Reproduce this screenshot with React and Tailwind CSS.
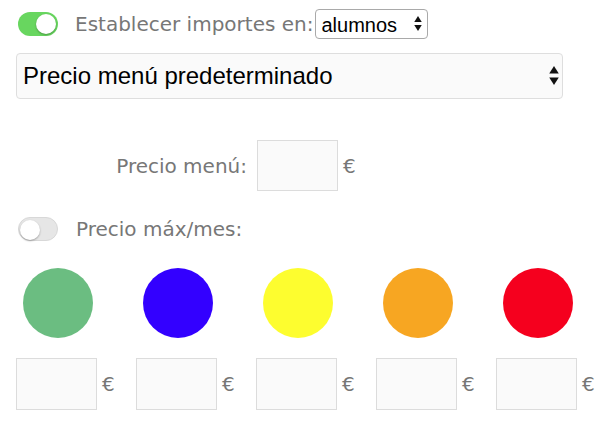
import { useState } from 'react';

const colores = ['#6bbd81', '#3300ff', '#fdfd2f', '#f7a622', '#f5001e'];

function Toggle({ on }) {
  return (
    <div
      className={`relative w-[40px] h-[24px] rounded-full shrink-0 ${
        on ? 'bg-[#68d65f]' : 'bg-[#e6e6e6] border border-[#d8d8d8]'
      }`}
    >
      <div
        className={`absolute top-[2px] w-[20px] h-[20px] rounded-full bg-white shadow-[0_1px_2px_rgba(0,0,0,0.3)] ${
          on ? 'left-[18px]' : 'left-[1px] top-[1px]'
        }`}
      />
    </div>
  );
}

function Arrows({ className }) {
  return (
    <svg viewBox="0 0 10 20" className={className}>
      <path d="M5 0 L10 8 L0 8 Z" fill="#111" />
      <path d="M0 12 L10 12 L5 20 Z" fill="#111" />
    </svg>
  );
}

export default function App() {
  const [tipo, setTipo] = useState('alumnos');
  const [menu, setMenu] = useState('pred');

  return (
    <div className="w-[605px] h-[443px] bg-white overflow-hidden font-['DejaVu_Sans',sans-serif] text-[#777]">
      {/* fila superior */}
      <div className="flex items-center mt-[9px] h-[30px] pl-[18px]">
        <Toggle on />
        <span className="ml-[17px] text-[20px] leading-none">Establecer importes en:</span>
        <div className="relative ml-[2px]">
          <select
            value={tipo}
            onChange={e => setTipo(e.target.value)}
            className="appearance-none w-[113px] h-[30px] pl-[5px] rounded-[4px] border border-[#a9a9a9] bg-white text-black text-[20px] font-['Liberation_Sans',sans-serif] outline-none"
          >
            <option value="alumnos">alumnos</option>
            <option value="profesores">profesores</option>
          </select>
          <Arrows className="absolute right-[6px] top-[7px] w-[8px] h-[15px] pointer-events-none" />
        </div>
      </div>

      {/* selector de precio */}
      <div className="relative mt-[14px] ml-[16px] w-[547px]">
        <select
          value={menu}
          onChange={e => setMenu(e.target.value)}
          className="appearance-none w-full h-[46px] pl-[6px] rounded-[4px] border border-[#dedede] bg-[#fafafa] text-black text-[24px] font-['Liberation_Sans',sans-serif] outline-none"
        >
          <option value="pred">Precio menú predeterminado</option>
        </select>
        <Arrows className="absolute right-[4px] top-[13px] w-[10px] h-[19px] pointer-events-none" />
      </div>

      {/* precio menú */}
      <div className="flex items-center mt-[41px] h-[51px]">
        <span className="w-[247px] text-right text-[20px] leading-none">Precio menú:</span>
        <input className="ml-[10px] w-[81px] h-[51px] border border-[#dcdcdc] bg-[#fafafa] outline-none" />
        <span className="ml-[5px] text-[20px] leading-none">€</span>
      </div>

      {/* precio máximo */}
      <div className="flex items-center mt-[26px] h-[24px] pl-[18px]">
        <Toggle on={false} />
        <span className="ml-[18px] text-[20px] leading-none">Precio máx/mes:</span>
      </div>

      {/* colores */}
      <div className="flex mt-[27px] pl-[16px]">
        {colores.map(c => (
          <div key={c} className="w-[120px] shrink-0">
            <div className="ml-[7px] w-[70px] h-[70px] rounded-full" style={{ backgroundColor: c }} />
          </div>
        ))}
      </div>

      <div className="flex mt-[20px] pl-[16px]">
        {colores.map(c => (
          <div key={c} className="w-[120px] shrink-0 flex items-center">
            <input className="w-[81px] h-[52px] border border-[#dcdcdc] bg-[#fafafa] outline-none" />
            <span className="ml-[5px] text-[20px] leading-none">€</span>
          </div>
        ))}
      </div>
    </div>
  );
}
